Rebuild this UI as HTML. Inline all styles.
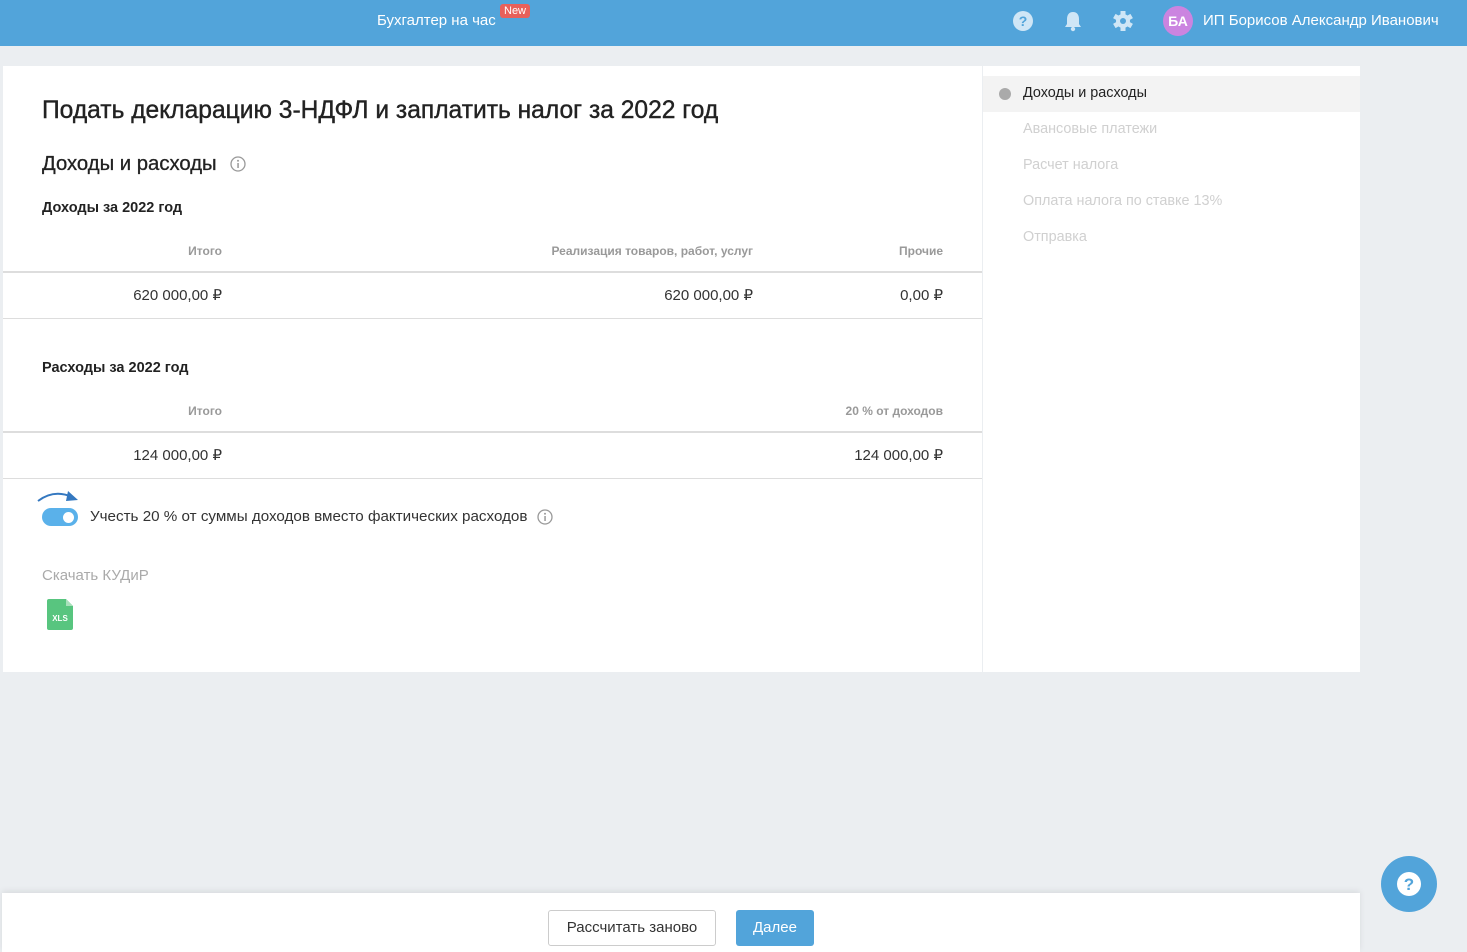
<!DOCTYPE html>
<html><head><meta charset="utf-8"><style>
*{box-sizing:border-box;margin:0;padding:0}
body{width:1467px;height:952px;background:#ebeef1;font-family:"Liberation Sans",sans-serif;position:relative;overflow:hidden;color:#333}
.top{position:absolute;left:0;top:0;width:1467px;height:46px;background:#52a4da;color:#fff}
.a{position:absolute}
.main{position:absolute;left:3px;top:66px;width:979px;height:606px;background:#fff}
.side{position:absolute;left:983px;top:66px;width:377px;height:606px;background:#fff}
.th{font-size:12px;font-weight:bold;color:#999}
.td{font-size:15px;color:#333}
.line{position:absolute;left:0;width:979px;height:1px;background:#ddd}
.si{position:absolute;left:40px;font-size:14.4px;color:#d0d0d0}
</style></head><body>
<div class="top">
<div class="a" style="left:377px;top:12px;font-size:15px">Бухгалтер на час</div>
<div class="a" style="left:500px;top:4px;background:#e8605a;border-radius:3px;font-size:11px;padding:1px 4px">New</div>
<svg class="a" style="left:1012px;top:10px" width="22" height="22"><circle cx="11" cy="11" r="10" fill="#cfe6f6"/><text x="11" y="16" text-anchor="middle" font-size="14" font-weight="bold" fill="#52a4da" font-family="Liberation Sans">?</text></svg>
<svg class="a" style="left:1063px;top:10px" width="20" height="22"><path d="M10 2c-4 0-6 3-6 7v5l-2 3h16l-2-3V9c0-4-2-7-6-7z" fill="#cfe6f6"/><circle cx="10" cy="19" r="2.2" fill="#cfe6f6"/></svg>
<svg class="a" style="left:1112px;top:10px" width="22" height="22"><g fill="#cfe6f6" transform="translate(11 11)"><circle r="7"/><rect x="-2.5" y="-10" width="5" height="20"/><rect x="-2.5" y="-10" width="5" height="20" transform="rotate(60)"/><rect x="-2.5" y="-10" width="5" height="20" transform="rotate(120)"/></g><circle cx="11" cy="11" r="3" fill="#52a4da"/></svg>
<div class="a" style="left:1163px;top:6px;width:30px;height:30px;border-radius:50%;background:#cb84e0;font-size:14px;font-weight:bold;text-align:center;line-height:30px">БА</div>
<div class="a" style="left:1203px;top:12px;font-size:15px">ИП Борисов Александр Иванович</div>
</div>
<div class="main">
<div class="a" style="left:39px;top:31px;font-size:24.6px;color:#222;-webkit-text-stroke:0.4px #222">Подать декларацию 3-НДФЛ и заплатить налог за 2022 год</div>
<div class="a" style="left:39px;top:87px;font-size:20.3px;color:#222;-webkit-text-stroke:0.3px #222">Доходы и расходы</div>
<svg class="a" style="left:227px;top:90px" width="16" height="16"><circle cx="8" cy="8" r="7" fill="none" stroke="#999" stroke-width="1.3"/><rect x="7.3" y="7" width="1.5" height="5" fill="#999"/><circle cx="8" cy="4.8" r="1" fill="#999"/></svg>
<div class="a" style="left:39px;top:134px;font-size:14.5px;font-weight:bold;color:#222">Доходы за 2022 год</div>
<div class="a th" style="right:760px;top:178px">Итого</div>
<div class="a th" style="right:229px;top:178px">Реализация товаров, работ, услуг</div>
<div class="a th" style="right:39px;top:178px">Прочие</div>
<div class="line" style="top:205px;height:2px;background:#ddd"></div>
<div class="a td" style="right:760px;top:220px">620 000,00 ₽</div>
<div class="a td" style="right:229px;top:220px">620 000,00 ₽</div>
<div class="a td" style="right:39px;top:220px">0,00 ₽</div>
<div class="line" style="top:252px"></div>
<div class="a" style="left:39px;top:294px;font-size:14.5px;font-weight:bold;color:#222">Расходы за 2022 год</div>
<div class="a th" style="right:760px;top:338px">Итого</div>
<div class="a th" style="right:39px;top:338px">20 % от доходов</div>
<div class="line" style="top:365px;height:2px"></div>
<div class="a td" style="right:760px;top:380px">124 000,00 ₽</div>
<div class="a td" style="right:39px;top:380px">124 000,00 ₽</div>
<div class="line" style="top:412px"></div>
<svg class="a" style="left:33px;top:423px" width="45" height="16"><path d="M2 12 Q18 0 36 8" fill="none" stroke="#3478c0" stroke-width="2"/><path d="M32 2 L42 11 L30 12 Z" fill="#3478c0"/></svg>
<div class="a" style="left:39px;top:442px;width:36px;height:18px;border-radius:9px;background:#5ab1ea"></div>
<div class="a" style="left:60px;top:446px;width:11px;height:11px;border-radius:50%;background:#fff"></div>
<div class="a" style="left:87px;top:442px;font-size:15.2px;color:#333">Учесть 20 % от суммы доходов вместо фактических расходов</div>
<svg class="a" style="left:534px;top:443px" width="16" height="16"><circle cx="8" cy="8" r="7" fill="none" stroke="#999" stroke-width="1.3"/><rect x="7.3" y="7" width="1.5" height="5" fill="#999"/><circle cx="8" cy="4.8" r="1" fill="#999"/></svg>
<div class="a" style="left:39px;top:501px;font-size:15px;color:#aaa">Скачать КУДиР</div>
<svg class="a" style="left:44px;top:533px" width="26" height="31"><path d="M2 0H19L26 7V29a2 2 0 0 1-2 2H2a2 2 0 0 1-2-2V2a2 2 0 0 1 2-2z" fill="#58c57f"/><path d="M19 0V7H26Z" fill="#a8e0bb"/><text x="13" y="22" text-anchor="middle" font-size="8" font-weight="bold" fill="#fff" font-family="Liberation Sans">XLS</text></svg>
</div>
<div class="side">
<div class="a" style="left:0;top:10px;width:377px;height:36px;background:#f3f3f3"></div>
<div class="a" style="left:16px;top:22px;width:12px;height:12px;border-radius:50%;background:#aaa"></div>
<div class="si" style="top:19px;color:#222">Доходы и расходы</div>
<div class="si" style="top:55px">Авансовые платежи</div>
<div class="si" style="top:91px">Расчет налога</div>
<div class="si" style="top:127px">Оплата налога по ставке 13%</div>
<div class="si" style="top:163px">Отправка</div>
</div>
<div class="a" style="left:2px;top:893px;width:1358px;height:59px;background:#fff;box-shadow:0 -2px 6px rgba(0,0,0,.08)"></div>
<div class="a" style="left:548px;top:910px;width:168px;height:36px;border:1px solid #ccc;border-radius:3px;font-size:15px;text-align:center;line-height:34px;color:#333;background:#fff">Рассчитать заново</div>
<div class="a" style="left:736px;top:910px;width:78px;height:36px;border-radius:3px;background:#52a4da;font-size:15px;text-align:center;line-height:36px;color:#fff">Далее</div>
<div class="a" style="left:1381px;top:856px;width:56px;height:56px;border-radius:50%;background:#52a4da"></div>
<svg class="a" style="left:1396px;top:871px" width="26" height="26"><circle cx="13" cy="13" r="12" fill="#fff"/><text x="13" y="19" text-anchor="middle" font-size="17" font-weight="bold" fill="#52a4da" font-family="Liberation Sans">?</text></svg>
</body></html>
